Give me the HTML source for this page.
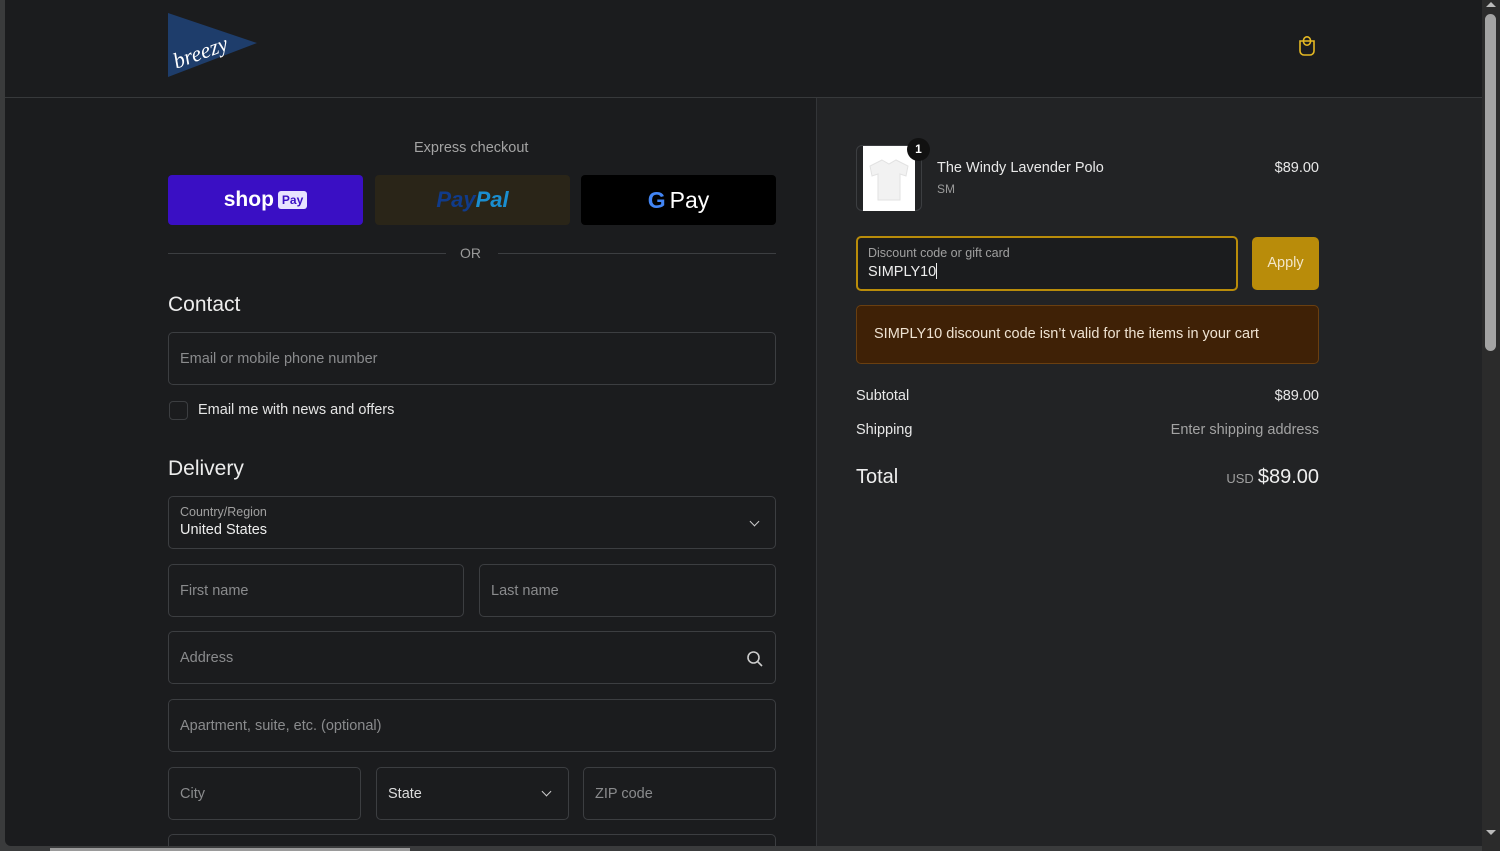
<!DOCTYPE html>
<html><head><meta charset="utf-8"><style>
*{box-sizing:border-box;margin:0;padding:0}
html,body{width:1500px;height:851px;overflow:hidden}
body{background:#3a3b3c;font-family:"Liberation Sans",Arial,sans-serif;position:relative;color:#e8e8e8}
#w{position:absolute;left:0;top:0;width:1500px;height:851px;overflow:hidden}
.a{position:absolute}
.page{left:5px;top:0;width:1477px;height:846px;background:#1b1c1e;overflow:hidden;border-bottom-left-radius:6px}
.right{left:816px;top:98px;width:666px;height:748px;background:#222325;border-left:1px solid #333538}
.hdr{left:5px;top:97px;width:1477px;height:1px;background:#37393b}
.inp{position:absolute;border:1px solid #3c3e41;border-radius:5px;background:#1b1c1e;font-size:14.5px;color:#8a8b8d;padding-left:11px;display:flex;align-items:center}
.chev{position:absolute;width:7px;height:7px;border-right:1.5px solid #ccc;border-bottom:1.5px solid #ccc;transform:rotate(45deg)}
.t{position:absolute;white-space:nowrap}
.r{position:absolute;white-space:nowrap;right:181px}
</style></head><body><div id="w">
<div class="a page"></div>
<div class="a right"></div>
<div class="a hdr"></div>
<svg class="a" style="left:167px;top:13px" width="92" height="64" viewBox="0 0 92 64"><path d="M1 0 L90 30 L1 64 Z" fill="#1e3d6b"/><text x="4" y="44" font-family="Liberation Serif,serif" font-style="italic" font-size="22" fill="#fff" transform="rotate(-20 40 35)">breezy</text></svg>
<svg class="a" style="left:1297px;top:33px" width="20" height="24" viewBox="0 0 20 24"><path d="M3 8 H17 V18 a4 4 0 0 1 -4 4 H7 a4 4 0 0 1 -4 -4 Z" fill="none" stroke="#e5b823" stroke-width="1.6"/><ellipse cx="10" cy="8" rx="3.6" ry="4.2" fill="none" stroke="#e5b823" stroke-width="1.6"/></svg>
<div class="a" style="left:1482px;top:0;width:18px;height:851px;background:#2b2b2b"></div>
<div class="a" style="left:1485px;top:14px;width:11px;height:337px;background:#a3a3a3;border-radius:6px"></div>
<div class="a" style="left:1486px;top:2px;width:0;height:0;border-left:5px solid transparent;border-right:5px solid transparent;border-bottom:5px solid #bbb"></div>
<div class="a" style="left:1486px;top:830px;width:0;height:0;border-left:5px solid transparent;border-right:5px solid transparent;border-top:5px solid #bbb"></div>
<div class="a" style="left:50px;top:848px;width:360px;height:3px;background:#9a9a9a"></div>

<div class="t" style="left:414px;top:140px;font-size:14.5px;color:#a3a3a3">Express checkout</div>
<div class="a" style="left:168px;top:175px;width:195px;height:50px;background:#3a0fc4;border-radius:4px;display:flex;align-items:center;justify-content:center"><span style="font-weight:bold;font-size:21px;color:#fff">shop</span><span style="margin-left:4px;background:#e8e4ff;color:#3a0fc4;font-size:12px;padding:2px 4px;border-radius:3px;font-weight:bold">Pay</span></div>
<div class="a" style="left:375px;top:175px;width:195px;height:50px;background:#2a2518;border-radius:4px;display:flex;align-items:center;justify-content:center;font-style:italic;font-weight:bold;font-size:22px"><span style="color:#103b8a">Pay</span><span style="color:#1a8ed0">Pal</span></div>
<div class="a" style="left:581px;top:175px;width:195px;height:50px;background:#000;border-radius:4px;display:flex;align-items:center;justify-content:center;font-size:23px;color:#fff"><b style="color:#4285f4;font-size:23px;margin-right:4px">G</b>Pay</div>
<div class="a" style="left:168px;top:253px;width:278px;height:1px;background:#3c3e41"></div>
<div class="a" style="left:498px;top:253px;width:278px;height:1px;background:#3c3e41"></div>
<div class="t" style="left:460px;top:245px;font-size:14px;color:#9a9a9a">OR</div>

<div class="t" style="left:168px;top:293px;font-size:21px;color:#ececec">Contact</div>
<div class="inp" style="left:168px;top:332px;width:608px;height:53px">Email or mobile phone number</div>
<div class="a" style="left:169px;top:401px;width:19px;height:19px;border:1px solid #3c3e41;border-radius:4px"></div>
<div class="t" style="left:198px;top:402px;font-size:14.5px;color:#e5e5e5">Email me with news and offers</div>

<div class="t" style="left:168px;top:457px;font-size:21px;color:#ececec">Delivery</div>
<div class="inp" style="left:168px;top:496px;width:608px;height:53px;display:block;padding-top:8px"><div style="font-size:12.5px;color:#a0a0a0">Country/Region</div><div style="font-size:14.5px;color:#eee;margin-top:3px">United States</div></div>
<div class="chev" style="left:751px;top:518px"></div>
<div class="inp" style="left:168px;top:564px;width:296px;height:53px">First name</div>
<div class="inp" style="left:479px;top:564px;width:297px;height:53px">Last name</div>
<div class="inp" style="left:168px;top:631px;width:608px;height:53px">Address</div>
<svg class="a" style="left:746px;top:650px" width="18" height="18" viewBox="0 0 18 18"><circle cx="7.5" cy="7.5" r="5.5" fill="none" stroke="#ccc" stroke-width="1.6"/><path d="M11.5 11.5 L16 16" stroke="#ccc" stroke-width="1.6"/></svg>
<div class="inp" style="left:168px;top:699px;width:608px;height:53px">Apartment, suite, etc. (optional)</div>
<div class="inp" style="left:168px;top:767px;width:193px;height:53px">City</div>
<div class="inp" style="left:376px;top:767px;width:193px;height:53px;color:#ddd">State</div>
<div class="chev" style="left:543px;top:788px"></div>
<div class="inp" style="left:583px;top:767px;width:193px;height:53px">ZIP code</div>
<div class="inp" style="left:168px;top:834px;width:608px;height:12px;border-bottom:none;border-radius:5px 5px 0 0"></div>

<div class="a" style="left:856px;top:145px;width:66px;height:66px;border:1px solid #3c3e41;border-radius:6px;background:#222325"></div>
<div class="a" style="left:863px;top:146px;width:52px;height:65px;background:#fff"></div>
<svg class="a" style="left:866px;top:158px" width="46" height="44" viewBox="0 0 46 44"><path d="M16 2 L23 6 L30 2 L42 8 L40 18 L34 16 L34 42 L12 42 L12 16 L6 18 L4 8 Z" fill="#f2f2f2" stroke="#e2e2e2"/></svg>
<div class="a" style="left:907px;top:138px;width:23px;height:23px;border-radius:50%;background:#111;color:#fff;font-size:12px;font-weight:bold;text-align:center;line-height:23px">1</div>
<div class="t" style="left:937px;top:160px;font-size:14.5px;color:#e8e8e8">The Windy Lavender Polo</div>
<div class="t" style="left:937px;top:182px;font-size:12px;color:#9a9a9a">SM</div>
<div class="r" style="top:160px;font-size:14.5px;color:#e8e8e8">$89.00</div>

<div class="a" style="left:856px;top:236px;width:382px;height:55px;border:2px solid #b98c0a;border-radius:5px;background:#1b1c1e"></div>
<div class="t" style="left:868px;top:246px;font-size:12.5px;color:#a0a0a0">Discount code or gift card</div>
<div class="t" style="left:868px;top:263px;font-size:14.5px;color:#eee">SIMPLY10<span style="display:inline-block;width:1px;height:16px;background:#eee;vertical-align:-3px"></span></div>
<div class="a" style="left:1252px;top:237px;width:67px;height:53px;background:#b98c0a;border-radius:5px;color:#f2e6c8;font-size:14.5px;text-align:center;line-height:53px">Apply</div>
<div class="a" style="left:856px;top:305px;width:463px;height:59px;background:#3f2106;border:1px solid #6a3f10;border-radius:5px"></div>
<div class="t" style="left:874px;top:326px;font-size:14.5px;color:#efe3d2">SIMPLY10 discount code isn’t valid for the items in your cart</div>

<div class="t" style="left:856px;top:388px;font-size:14.5px;color:#e8e8e8">Subtotal</div>
<div class="r" style="top:388px;font-size:14.5px;color:#e8e8e8">$89.00</div>
<div class="t" style="left:856px;top:422px;font-size:14.5px;color:#e8e8e8">Shipping</div>
<div class="r" style="top:422px;font-size:14.5px;color:#a3a3a3">Enter shipping address</div>
<div class="t" style="left:856px;top:466px;font-size:20px;color:#eee">Total</div>
<div class="r" style="top:466px;font-size:20px;color:#eee"><span style="font-size:13px;color:#a0a0a0;margin-right:4px">USD</span>$89.00</div>
</div></body></html>
